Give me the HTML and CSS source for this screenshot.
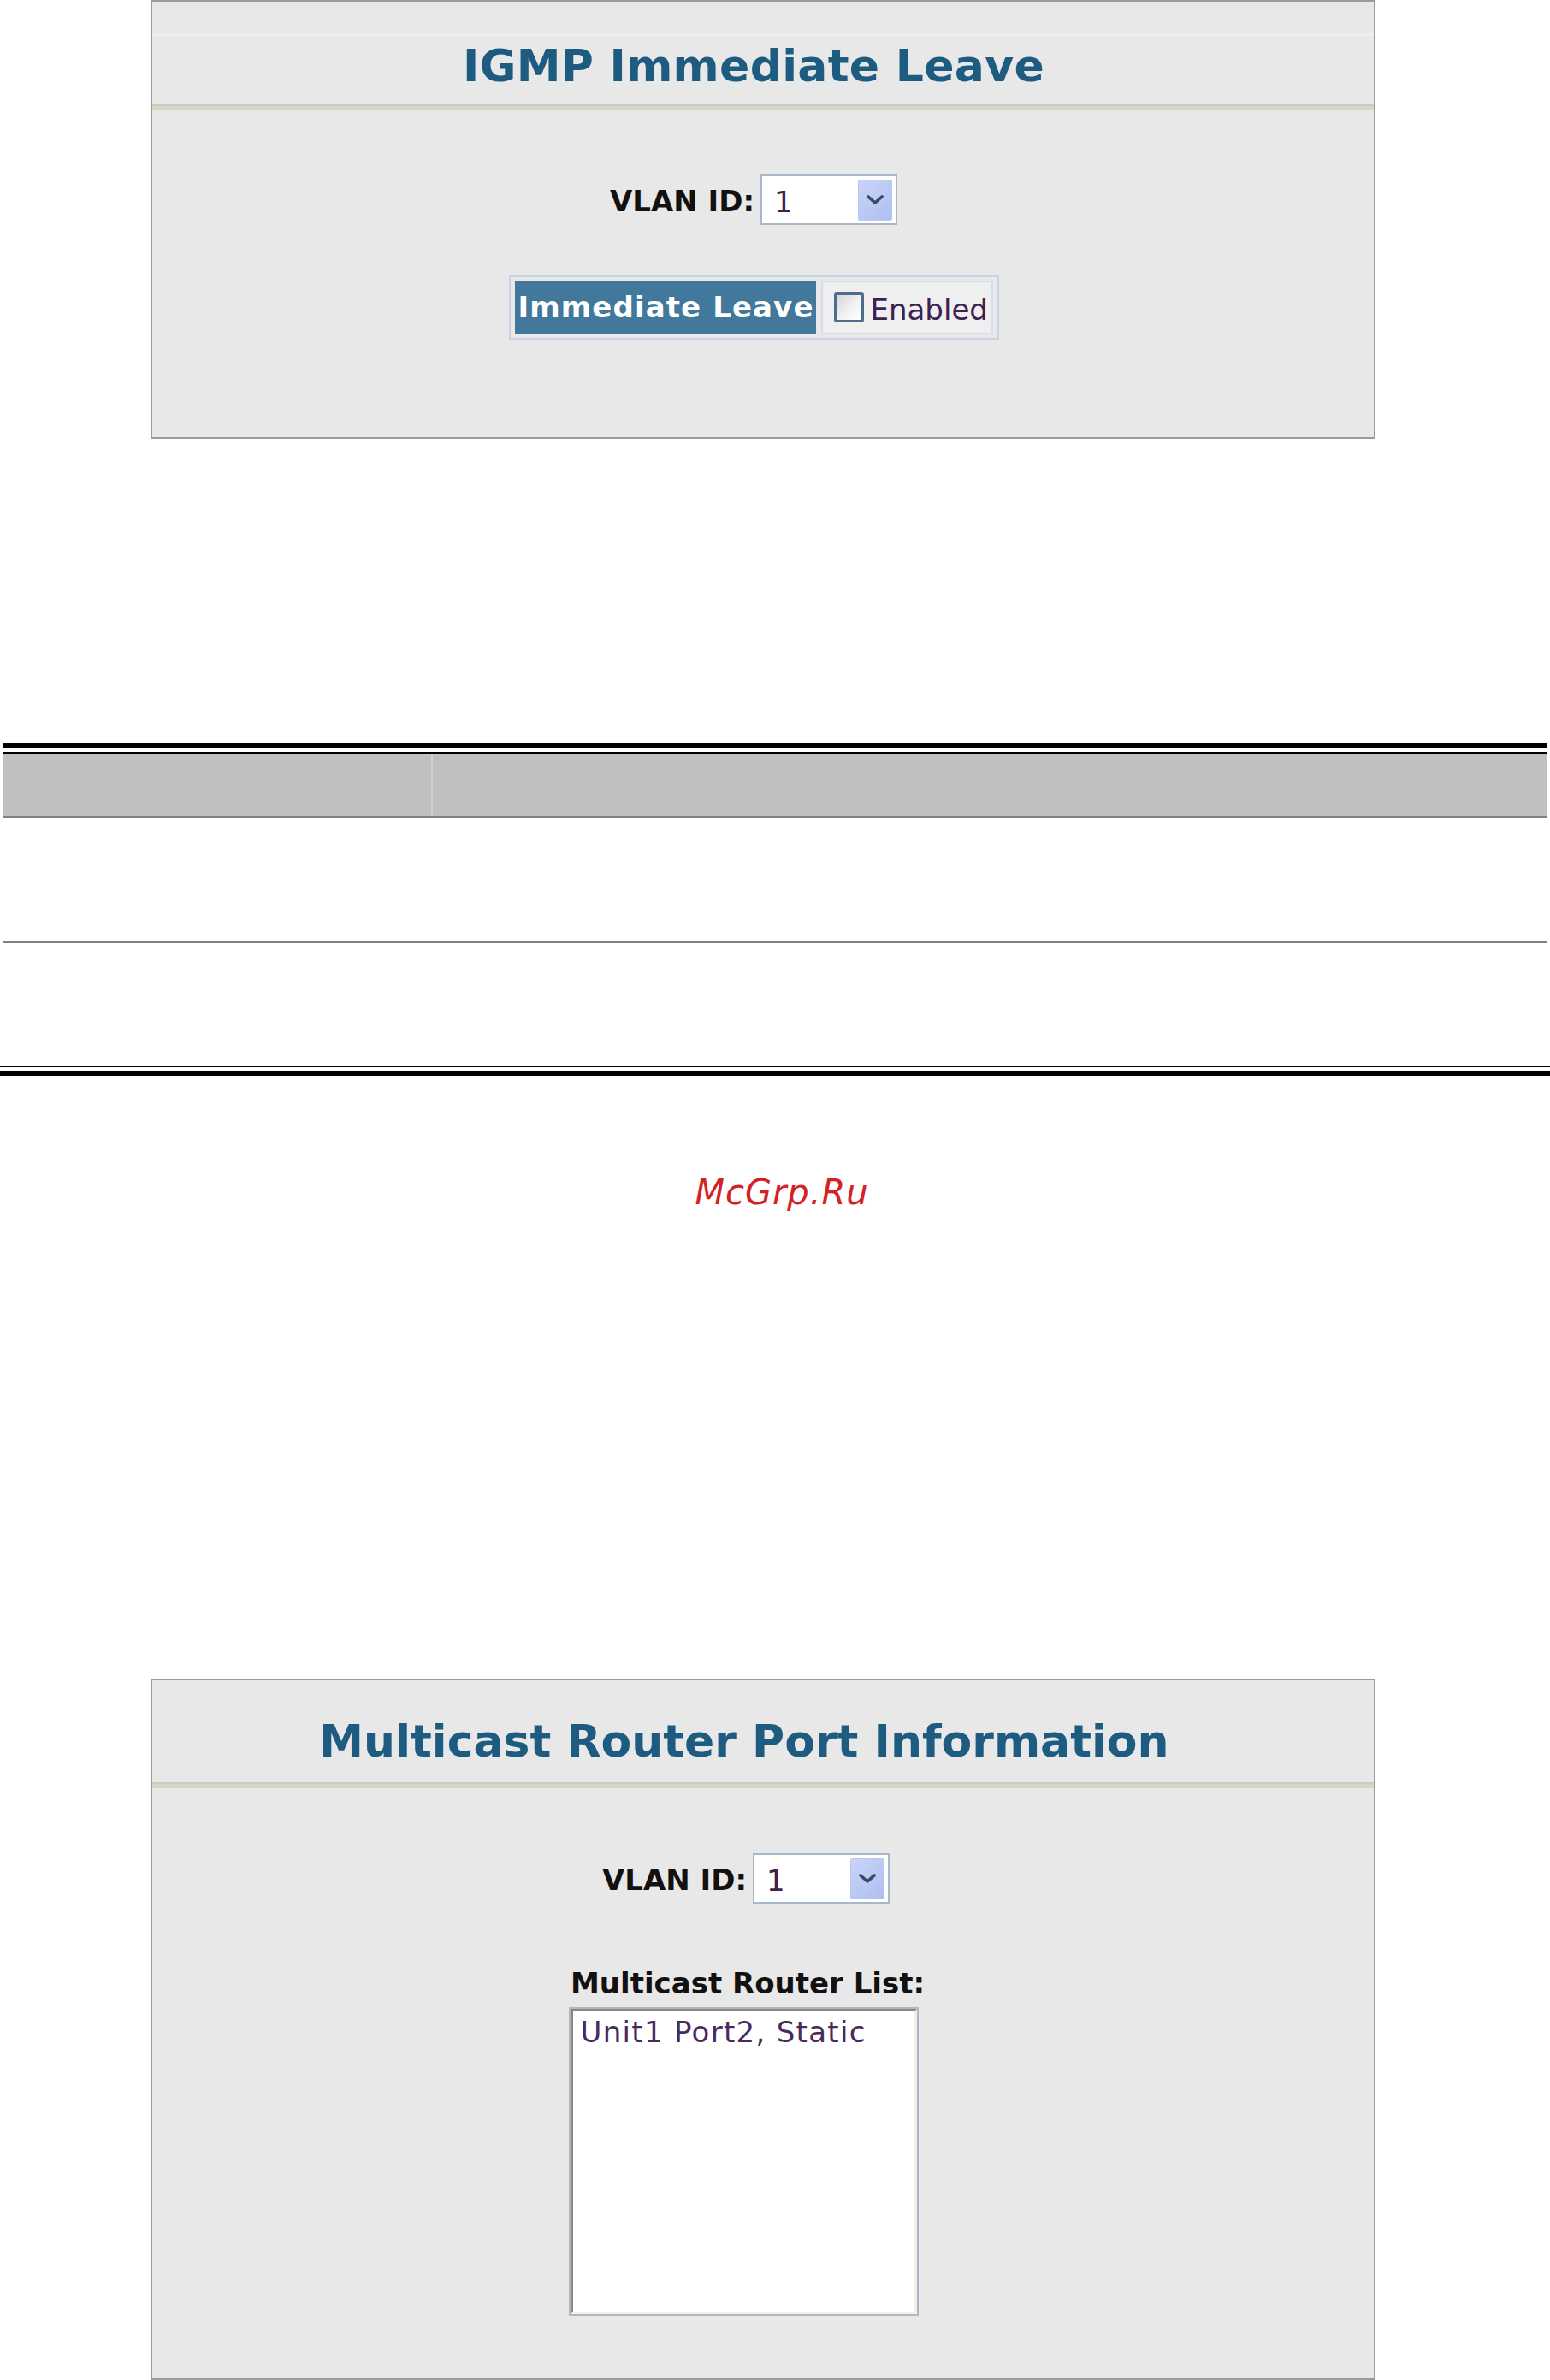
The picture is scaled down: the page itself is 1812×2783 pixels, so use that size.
FILE: index.html
```html
<!DOCTYPE html>
<html lang="en">
<head>
<meta charset="utf-8">
<title>IGMP Immediate Leave</title>
<link rel="stylesheet" href="styles.css">
</head>
<body>
<div class="page">

  <section class="panel panel-leave">
    <div class="panel-strip"></div>
    <div class="panel-head head-leave">
      <h1 class="panel-title">IGMP Immediate Leave</h1>
    </div>
    <div class="panel-body body-leave">
      <div class="vlan-row">
        <span class="field-label">VLAN ID:</span>
        <div class="select">
          <span class="select-value">1</span>
          <span class="select-btn">
            <svg width="22" height="14" viewBox="0 0 22 14"><path d="M3 3 L11 10 L19 3" fill="none" stroke="#3b4763" stroke-width="3.6" stroke-linecap="round" stroke-linejoin="round"/></svg>
          </span>
        </div>
      </div>
      <div class="leave-table">
        <div class="leave-name">Immediate Leave</div>
        <div class="leave-value">
          <span class="checkbox"></span>
          <span class="leave-text">Enabled</span>
        </div>
      </div>
    </div>
  </section>

  <section class="doc-table">
    <div class="rule-thick"></div>
    <div class="rule-thin rule-top-thin"></div>
    <div class="doc-head">
      <div class="doc-head-cell doc-col1"></div>
      <div class="doc-head-cell doc-col2"></div>
    </div>
    <div class="doc-row doc-row-sep"></div>
    <div class="doc-row doc-row-last"></div>
    <div class="rule-thin rule-bottom-thin"></div>
    <div class="rule-thick rule-bottom-thick"></div>
  </section>

  <div class="watermark">McGrp.Ru</div>

  <section class="panel panel-router">
    <div class="panel-head head-router">
      <h1 class="panel-title title-router">Multicast Router Port Information</h1>
    </div>
    <div class="panel-body body-router">
      <div class="vlan-row">
        <span class="field-label">VLAN ID:</span>
        <div class="select">
          <span class="select-value">1</span>
          <span class="select-btn">
            <svg width="22" height="14" viewBox="0 0 22 14"><path d="M3 3 L11 10 L19 3" fill="none" stroke="#3b4763" stroke-width="3.6" stroke-linecap="round" stroke-linejoin="round"/></svg>
          </span>
        </div>
      </div>
      <div class="list-label">Multicast Router List:</div>
      <div class="listbox">
        <div class="listbox-inner">
          <div class="list-item">Unit1 Port2, Static</div>
        </div>
      </div>
    </div>
  </section>

</div>
</body>
</html>
```

FILE: styles.css
```css
* {
  box-sizing: border-box;
}

html, body {
  margin: 0;
  padding: 0;
  background: #ffffff;
}

body {
  width: 1812px;
  height: 2783px;
  overflow: hidden;
  font-family: "DejaVu Sans", Verdana, sans-serif;
}

.page {
  width: 1812px;
}

/* ---------- panels ---------- */
.panel {
  margin-left: 176px;
  width: 1432px;
  background: #e8e8e8;
  border: 2px solid #9b9b9b;
  overflow: hidden;
}

.panel-leave {
  height: 513px;
}

.panel-router {
  margin-top: 545px;
  height: 820px;
}

.panel-strip {
  height: 40px;
  border-bottom: 3px solid #efefef;
}

.panel-head {
  border-bottom: 5px solid #d8d5c2;
  box-shadow: inset 0 -2px 0 #cacaca;
  text-align: center;
}

.head-leave {
  height: 87px;
  padding-top: 5px;
  padding-right: 22px;
}

.head-router {
  height: 126px;
  padding-top: 41px;
  padding-right: 44px;
}

.panel-title {
  margin: 0;
  font-family: "DejaVu Sans", Verdana, sans-serif;
  font-weight: bold;
  font-size: 52px;
  line-height: 60px;
  color: #1e5b80;
  letter-spacing: 0.3px;
}

.title-router {
  letter-spacing: 0;
}

.panel-body {
  display: flex;
  flex-direction: column;
  align-items: center;
}

.body-leave {
  padding-top: 75px;
  padding-right: 22px;
}

.body-router {
  padding-top: 76px;
  padding-right: 40px;
}

/* ---------- VLAN select ---------- */
.vlan-row {
  display: flex;
  align-items: center;
  gap: 7px;
  height: 59px;
}

.field-label {
  font-weight: bold;
  font-size: 34px;
  color: #111111;
  line-height: 40px;
  padding-top: 3px;
}

.select {
  width: 160px;
  height: 59px;
  background: #ffffff;
  border: 2px solid #a9b7ca;
  display: flex;
  align-items: center;
  justify-content: space-between;
  padding: 4px 4px 3px 14px;
}

.select-value {
  font-size: 34px;
  line-height: 40px;
  color: #3c2245;
  padding-top: 3px;
}

.select-btn {
  width: 40px;
  height: 48px;
  background: linear-gradient(135deg, #c9d4f7 0%, #aebff1 100%);
  border: 1px solid #b9c7ef;
  border-radius: 2px;
  display: flex;
  align-items: center;
  justify-content: center;
}

/* ---------- immediate leave table ---------- */
.leave-table {
  margin-top: 59px;
  width: 573px;
  height: 75px;
  border: 2px solid #c8d3e8;
  background: #e9e9e9;
  padding: 4px 5px;
  display: flex;
  gap: 6px;
}

.leave-name {
  width: 352px;
  height: 63px;
  background: #42789b;
  color: #ffffff;
  font-weight: bold;
  font-size: 34px;
  line-height: 63px;
  padding-left: 4px;
  letter-spacing: 1.1px;
  white-space: nowrap;
  overflow: hidden;
}

.leave-value {
  flex: 1;
  height: 63px;
  border: 2px solid #d5dcec;
  background: #efefef;
  display: flex;
  align-items: center;
  padding-left: 13px;
  gap: 8px;
}

.checkbox {
  width: 35px;
  height: 35px;
  border: 3px solid #4e6c8b;
  border-radius: 3px;
  background: linear-gradient(135deg, #d6d6d6 0%, #f4f4f4 60%, #ffffff 100%);
  flex: none;
}

.leave-text {
  font-size: 34px;
  line-height: 40px;
  color: #3e2150;
  padding-top: 4px;
}

/* ---------- document table ---------- */
.doc-table {
  margin-top: 356px;
}

.rule-thick {
  height: 6px;
  background: #000000;
  margin: 0 3px;
}

.rule-thin {
  height: 3px;
  background: #000000;
  margin: 0 3px;
}

.rule-top-thin {
  margin-top: 4px;
}

.doc-head {
  display: flex;
  height: 75px;
  margin: 0 3px;
  border-bottom: 3px solid #808080;
}

.doc-head-cell {
  background: #c0c0c0;
  height: 72px;
}

.doc-col1 {
  width: 503px;
  border-right: 2px solid #d2d2d2;
}

.doc-col2 {
  flex: 1;
}

.doc-row {
  margin: 0 3px;
}

.doc-row-sep {
  border-bottom: 3px solid #808080;
  height: 146px;
}

.doc-row-last {
  height: 141px;
}

.rule-bottom-thin {
  margin: 2px 0 0 0;
  height: 2px;
}

.rule-bottom-thick {
  margin: 4px 0 0 0;
}

/* ---------- watermark ---------- */
.watermark {
  margin-top: 112px;
  text-align: center;
  padding-left: 16px;
  font-family: "DejaVu Sans", sans-serif;
  font-style: italic;
  font-size: 40px;
  line-height: 48px;
  color: #d42222;
  letter-spacing: 1px;
}

/* ---------- router list ---------- */
.list-label {
  margin-top: 73px;
  font-weight: bold;
  font-size: 34px;
  line-height: 40px;
  color: #111111;
  padding-left: 4px;
}

.listbox {
  margin-top: 8px;
  width: 409px;
  height: 361px;
  border: 2px solid #a9b8cc;
  background: #ffffff;
  margin-left: -6px;
}

.listbox-inner {
  height: 100%;
  border-top: 3px solid #8d877a;
  border-left: 3px solid #8d877a;
  border-right: 3px solid #f3f1e4;
  border-bottom: 3px solid #f3f1e4;
  padding: 4px 0 0 9px;
}

.list-item {
  font-size: 34px;
  line-height: 40px;
  color: #4a2a5c;
  letter-spacing: 1.3px;
}
```
